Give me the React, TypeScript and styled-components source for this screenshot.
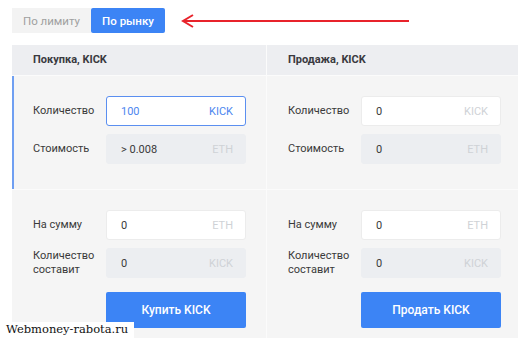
import styled, { createGlobalStyle } from 'styled-components';

const GlobalStyle = createGlobalStyle`
  body {
    margin: 0;
    background: #ffffff;
    font-family: Roboto, "Liberation Sans", sans-serif;
  }
`;

const Page = styled.div`
  position: relative;
  width: 520px;
  height: 340px;
  padding: 8px 2px 0 12px;
  box-sizing: border-box;
  overflow: hidden;
`;

const TabBar = styled.div`
  display: flex;
  align-items: center;
  height: 25px;
`;

const Tab = styled.button<{ $active?: boolean }>`
  width: ${p => (p.$active ? '74px' : '79px')};
  height: 25px;
  padding: 0;
  border: none;
  border-radius: ${p => (p.$active ? '2px' : '0')};
  background: ${p => (p.$active ? '#3c84f5' : '#f3f3f3')};
  color: ${p => (p.$active ? '#ffffff' : '#a0a0a0')};
  font-family: inherit;
  font-size: 11.5px;
  font-weight: ${p => (p.$active ? 500 : 400)};
  cursor: pointer;
`;

const Arrow = styled.svg`
  margin-left: 16px;
  width: 228px;
  height: 16px;
`;

const Panel = styled.div`
  display: grid;
  grid-template-columns: 254px 251px;
  column-gap: 1px;
  margin-top: 12px;
  background: #fbfbfb;
`;

const Column = styled.div`
  display: flex;
  flex-direction: column;
  row-gap: 1px;
`;

const Header = styled.div`
  height: 30px;
  line-height: 30px;
  padding-left: 21px;
  background: #edeef1;
  color: #3a3a3f;
  font-size: 11px;
  font-weight: 700;
`;

const Section = styled.div<{ $top?: boolean; $marked?: boolean }>`
  display: flex;
  flex-direction: column;
  gap: 8px;
  padding: 20px 0 ${p => (p.$top ? '25px' : '10px')} 21px;
  background: #f5f5f5;
  box-shadow: ${p => (p.$marked ? 'inset 2px 0 0 #6f9ff2' : 'none')};
`;

const Row = styled.div`
  display: flex;
  align-items: center;
`;

const Label = styled.div`
  width: 73px;
  color: #3a3a3a;
  font-size: 11px;
  line-height: 14px;
`;

const Field = styled.div<{ $kind: 'active' | 'plain' | 'readonly' }>`
  display: flex;
  align-items: center;
  justify-content: space-between;
  width: 140px;
  height: 30px;
  box-sizing: border-box;
  padding: 0 12px 0 14px;
  border-radius: 3px;
  font-size: 11px;
  background: ${p => (p.$kind === 'readonly' ? '#eceef1' : '#ffffff')};
  border: 1px solid
    ${p => (p.$kind === 'active' ? '#5b8ff0' : p.$kind === 'plain' ? '#ececec' : '#eceef1')};
  color: ${p => (p.$kind === 'active' ? '#4d86ef' : '#3a3a3a')};
`;

const Unit = styled.span<{ $active?: boolean }>`
  color: ${p => (p.$active ? '#4d86ef' : '#cfd2d6')};
  font-size: 11px;
`;

const ActionButton = styled.button`
  margin: 6px 0 0 73px;
  width: 140px;
  height: 36px;
  border: none;
  border-radius: 2px;
  background: #3c84f5;
  color: #ffffff;
  font-family: inherit;
  font-size: 12px;
  font-weight: 500;
  cursor: pointer;
`;

const Watermark = styled.div`
  position: absolute;
  left: 0;
  bottom: 0;
  padding: 0 6px 4px 6px;
  background: #ffffff;
  color: #111111;
  font-family: "DejaVu Serif", "Liberation Serif", serif;
  font-size: 11.5px;
  line-height: 14px;
`;

type FieldData = {
  label: string;
  value: string;
  unit: string;
  kind: 'active' | 'plain' | 'readonly';
};

function Side({ title, top, bottom, action, marked }: {
  title: string;
  top: FieldData[];
  bottom: FieldData[];
  action: string;
  marked?: boolean;
}) {
  const renderRow = (f: FieldData) => (
    <Row key={f.label}>
      <Label>{f.label}</Label>
      <Field $kind={f.kind}>
        <span>{f.value}</span>
        <Unit $active={f.kind === 'active'}>{f.unit}</Unit>
      </Field>
    </Row>
  );

  return (
    <Column>
      <Header>{title}</Header>
      <Section $top $marked={marked}>{top.map(renderRow)}</Section>
      <Section>
        {bottom.map(renderRow)}
        <ActionButton>{action}</ActionButton>
      </Section>
    </Column>
  );
}

export default function App() {
  return (
    <>
      <GlobalStyle />
      <Page>
        <TabBar>
          <Tab>По лимиту</Tab>
          <Tab $active>По рынку</Tab>
          <Arrow viewBox="0 0 228 16">
            <path d="M2 8 H228" stroke="#e8232b" strokeWidth="2" fill="none" />
            <path d="M12 2 L2 8 L12 14" stroke="#e8232b" strokeWidth="2" fill="none" />
          </Arrow>
        </TabBar>
        <Panel>
          <Side
            title="Покупка, KICK"
            marked
            top={[
              { label: 'Количество', value: '100', unit: 'KICK', kind: 'active' },
              { label: 'Стоимость', value: '> 0.008', unit: 'ETH', kind: 'readonly' },
            ]}
            bottom={[
              { label: 'На сумму', value: '0', unit: 'ETH', kind: 'plain' },
              { label: 'Количество составит', value: '0', unit: 'KICK', kind: 'readonly' },
            ]}
            action="Купить KICK"
          />
          <Side
            title="Продажа, KICK"
            top={[
              { label: 'Количество', value: '0', unit: 'KICK', kind: 'plain' },
              { label: 'Стоимость', value: '0', unit: 'ETH', kind: 'readonly' },
            ]}
            bottom={[
              { label: 'На сумму', value: '0', unit: 'ETH', kind: 'plain' },
              { label: 'Количество составит', value: '0', unit: 'KICK', kind: 'readonly' },
            ]}
            action="Продать KICK"
          />
        </Panel>
        <Watermark>Webmoney-rabota.ru</Watermark>
      </Page>
    </>
  );
}
